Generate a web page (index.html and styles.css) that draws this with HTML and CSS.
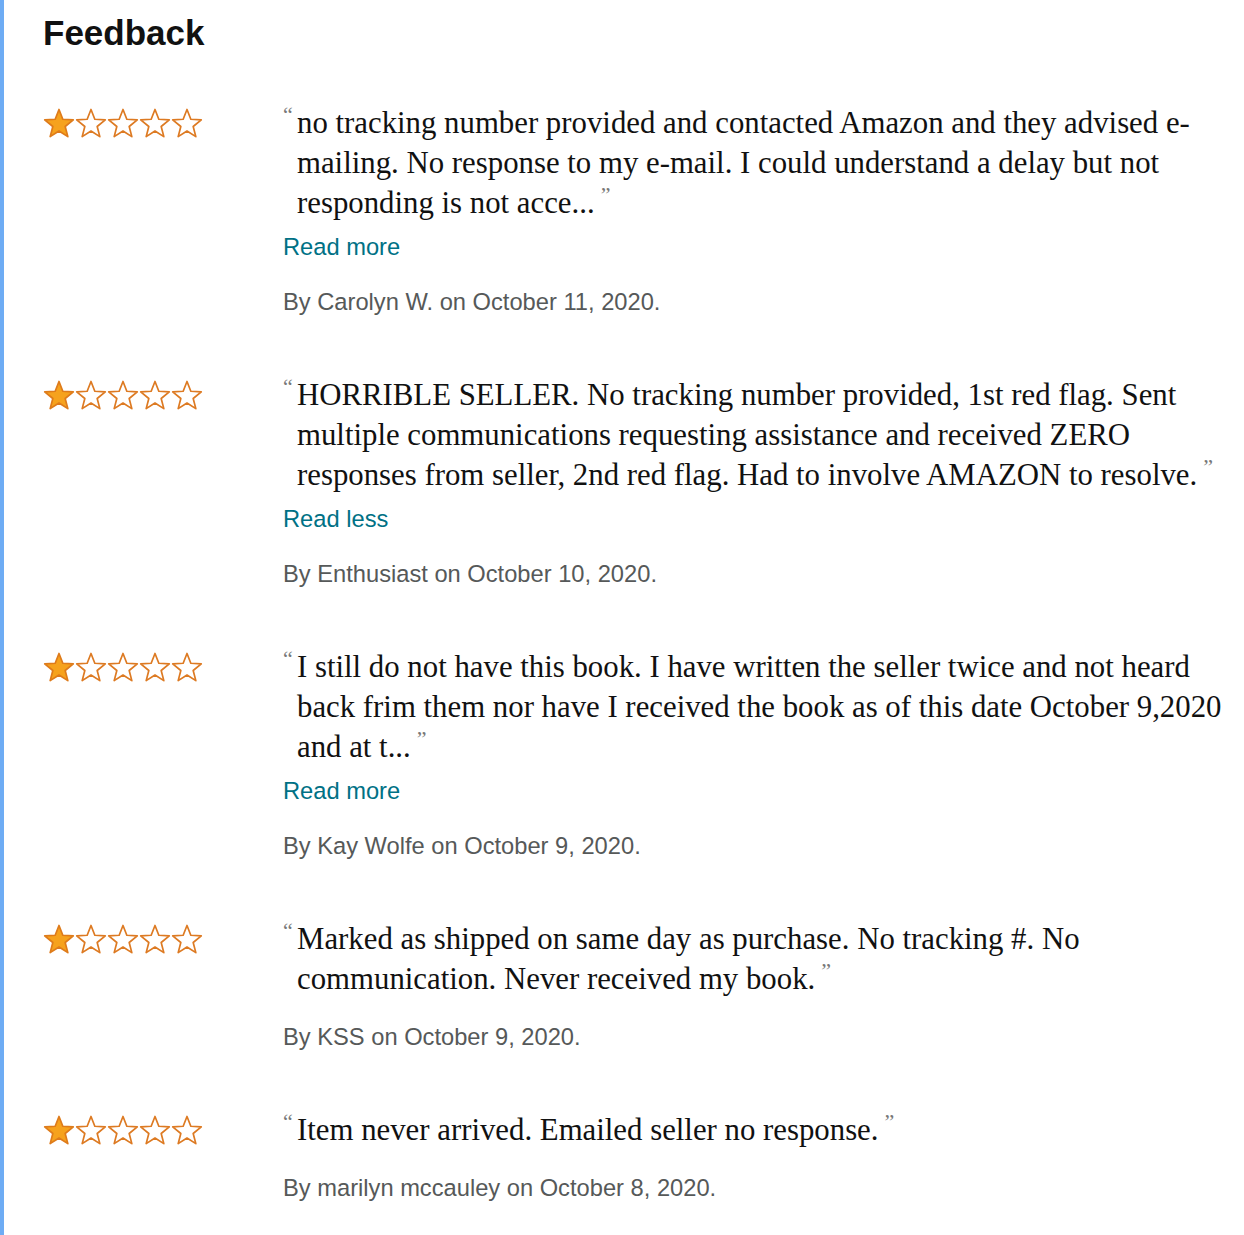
FILE: index.html
```html
<!DOCTYPE html>
<html lang="en">
<head>
    <meta charset="UTF-8">
    <title>Feedback</title>
    <link rel="stylesheet" href="styles.css">
</head>
<body>
    <svg class="defs" width="0" height="0" aria-hidden="true">
        <symbol id="star" viewBox="-1 -1 32 30">
            <polygon points="15,0.5 18.82,10.24 29.27,10.86 21.18,17.51 23.82,27.64 15,22 6.18,27.64 8.82,17.51 0.73,10.86 11.18,10.24"/>
        </symbol>
    </svg>

    <div class="page">
        <h2 class="title">Feedback</h2>

        <div class="reviews">
            <div class="review">
                <div class="stars">
                    <svg class="star full"><use href="#star"/></svg><svg class="star"><use href="#star"/></svg><svg class="star"><use href="#star"/></svg><svg class="star"><use href="#star"/></svg><svg class="star"><use href="#star"/></svg>
                </div>
                <div class="body">
                    <p class="quote"><span class="q-open">&ldquo;</span>no tracking number provided and contacted Amazon and they advised e-mailing. No response to my e-mail. I could understand a delay but not responding is not acce...<span class="q-close">&rdquo;</span></p>
                    <a class="toggle" href="#">Read more</a>
                    <p class="by">By Carolyn W. on October 11, 2020.</p>
                </div>
            </div>

            <div class="review">
                <div class="stars">
                    <svg class="star full"><use href="#star"/></svg><svg class="star"><use href="#star"/></svg><svg class="star"><use href="#star"/></svg><svg class="star"><use href="#star"/></svg><svg class="star"><use href="#star"/></svg>
                </div>
                <div class="body">
                    <p class="quote"><span class="q-open">&ldquo;</span>HORRIBLE SELLER. No tracking number provided, 1st red flag. Sent multiple communications requesting assistance and received ZERO responses from seller, 2nd red flag. Had to involve AMAZON to resolve.<span class="q-close">&rdquo;</span></p>
                    <a class="toggle" href="#">Read less</a>
                    <p class="by">By Enthusiast on October 10, 2020.</p>
                </div>
            </div>

            <div class="review">
                <div class="stars">
                    <svg class="star full"><use href="#star"/></svg><svg class="star"><use href="#star"/></svg><svg class="star"><use href="#star"/></svg><svg class="star"><use href="#star"/></svg><svg class="star"><use href="#star"/></svg>
                </div>
                <div class="body">
                    <p class="quote"><span class="q-open">&ldquo;</span>I still do not have this book. I have written the seller twice and not heard back frim them nor have I received the book as of this date October 9,2020 and at t...<span class="q-close">&rdquo;</span></p>
                    <a class="toggle" href="#">Read more</a>
                    <p class="by">By Kay Wolfe on October 9, 2020.</p>
                </div>
            </div>

            <div class="review">
                <div class="stars">
                    <svg class="star full"><use href="#star"/></svg><svg class="star"><use href="#star"/></svg><svg class="star"><use href="#star"/></svg><svg class="star"><use href="#star"/></svg><svg class="star"><use href="#star"/></svg>
                </div>
                <div class="body">
                    <p class="quote"><span class="q-open">&ldquo;</span>Marked as shipped on same day as purchase. No tracking #. No communication. Never received my book.<span class="q-close">&rdquo;</span></p>
                    <p class="by">By KSS on October 9, 2020.</p>
                </div>
            </div>

            <div class="review">
                <div class="stars">
                    <svg class="star full"><use href="#star"/></svg><svg class="star"><use href="#star"/></svg><svg class="star"><use href="#star"/></svg><svg class="star"><use href="#star"/></svg><svg class="star"><use href="#star"/></svg>
                </div>
                <div class="body">
                    <p class="quote"><span class="q-open">&ldquo;</span>Item never arrived. Emailed seller no response.<span class="q-close">&rdquo;</span></p>
                    <p class="by">By marilyn mccauley on October 8, 2020.</p>
                </div>
            </div>
        </div>
    </div>
</body>
</html>
```

FILE: styles.css
```css
body {
    margin: 0;
    padding: 0;
    background: #fff;
    font-family: 'Liberation Sans', Arial, sans-serif;
    color: #0f1111;
}

.defs {
    position: absolute;
    width: 0;
    height: 0;
}

.page {
    border-left: 4px solid #6eacf4;
    min-height: 100vh;
    padding: 13px 8px 0 39px;
    box-sizing: border-box;
}

.title {
    margin: 0;
    font-size: 35px;
    font-weight: bold;
    color: #111;
}

.reviews {
    display: flex;
    flex-direction: column;
    gap: 60px;
    margin-top: 50px;
}

.review {
    display: grid;
    grid-template-columns: 240px 1fr;
}

.stars {
    display: flex;
    align-items: center;
    height: 40px;
}

.star {
    width: 32px;
    height: 30px;
    fill: #fff;
    stroke: #dd7a22;
    stroke-width: 1.7;
    stroke-linejoin: round;
}

.star.full {
    fill: #f6a21d;
    stroke: #de7b1b;
}

.quote {
    margin: 0;
    padding-left: 14px;
    text-indent: -14px;
    font-family: 'Liberation Serif', 'Times New Roman', serif;
    font-size: 30.8px;
    line-height: 40px;
    color: #111;
}

.q-open, .q-close {
    display: inline-block;
    text-indent: 0;
    font-size: 22px;
    line-height: 20px;
    vertical-align: top;
    margin-top: 2px;
    color: #777;
}

.q-open {
    width: 14px;
}

.q-close {
    margin-left: 6px;
}

.toggle {
    display: block;
    margin-top: 11px;
    font-size: 23.7px;
    line-height: 26px;
    color: #007185;
    text-decoration: none;
}

.by {
    margin: 25px 0 0;
    font-size: 23.7px;
    line-height: 26px;
    color: #565959;
}

.toggle + .by {
    margin-top: 29px;
}
```
